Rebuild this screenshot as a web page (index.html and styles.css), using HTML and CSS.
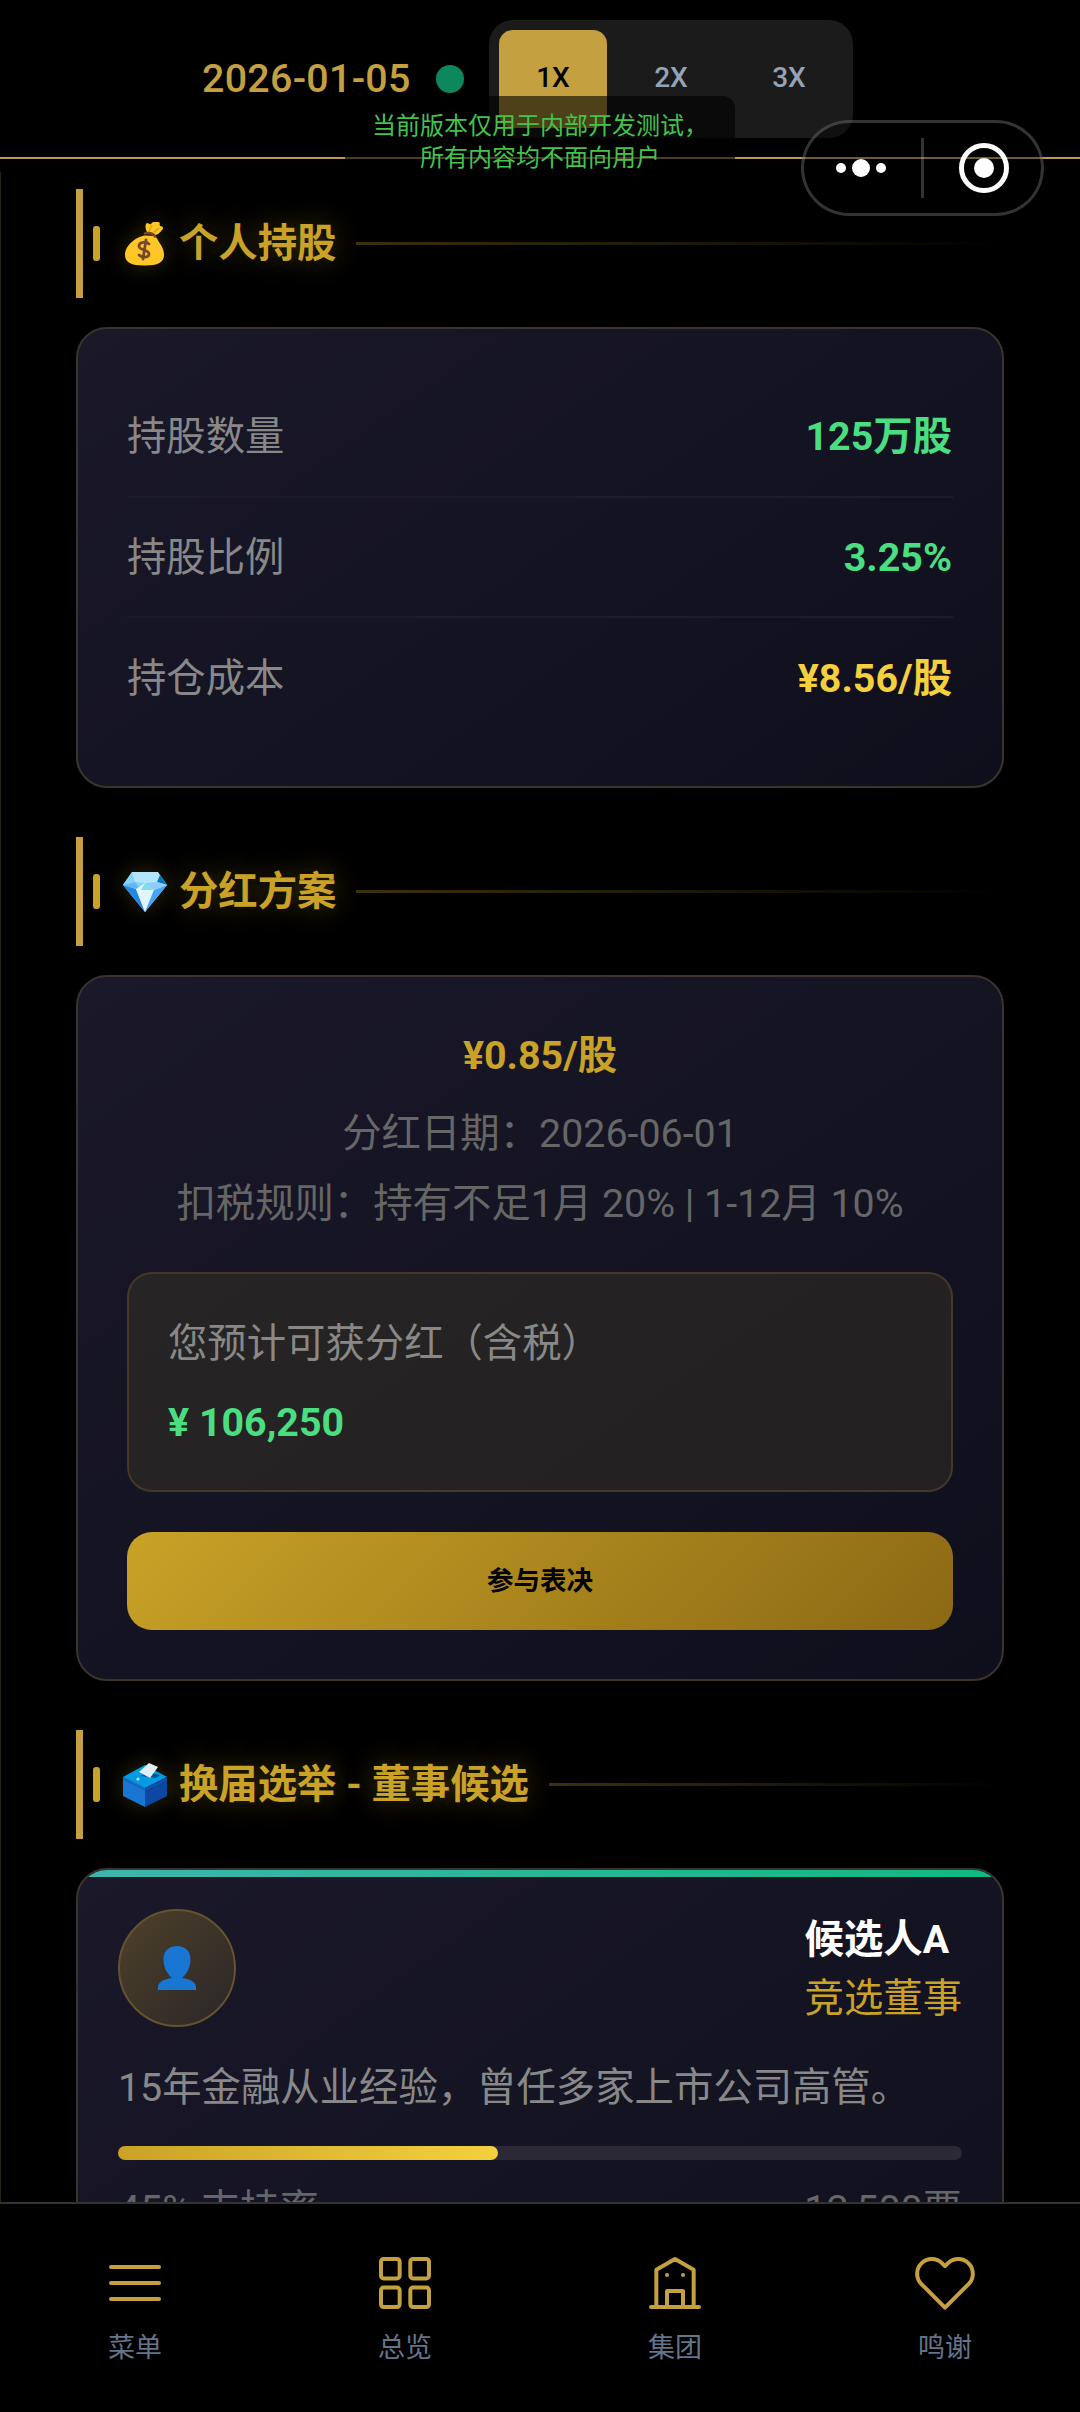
FILE: index.html
```html
<!DOCTYPE html>
<html lang="zh-CN">
<head>
<meta charset="utf-8">
<title>个人持股</title>
<link rel="stylesheet" href="styles.css">
</head>
<body>
<div class="app">
  <header class="topbar">
    <span class="date">2026-01-05</span>
    <span class="status"></span>
    <div class="speed">
      <button class="speed-btn active">1X</button>
      <button class="speed-btn">2X</button>
      <button class="speed-btn">3X</button>
    </div>
  </header>

  <main class="content">
    <h2 class="section-title">
      <svg class="emoji" viewBox="0 0 44 44">
        <path fill="#fdc727" d="M22 13.500C12 15 2 24 2 33c0 7.500 6 10.500 19.500 10.500S41 40.500 41 33c0-6-3-10-5-13-1.500-2.500-2-4-4-6z"/>
        <path fill="#fdc727" d="M24 10c-2-4-2-8 0-9 2 0 3 2 4 1 1-2 4-3 7-2 3 0 1 3 2 4 3 0 4 2 2 4-2 3-5 5-8 5z"/>
        <path d="M26 10l3-7M30 11l6-5" fill="none" stroke="#e9a613" stroke-width="1.8"/>
        <path d="M22 11.500c4-1 8 0 10 3" fill="none" stroke="#75482d" stroke-width="2.6" stroke-linecap="round"/>
        <path d="M26 22c-3-3-10-2-10 2 0 5 10 3 10 8 0 4-7 4-10 1M23 18l-3 19" fill="none" stroke="#75482d" stroke-width="2.8" stroke-linecap="round"/>
      </svg>
      <span class="title-text">个人持股</span>
    </h2>
    <section class="card holdings">
      <div class="row"><span class="label">持股数量</span><span class="value green">125万股</span></div>
      <div class="row"><span class="label">持股比例</span><span class="value green">3.25%</span></div>
      <div class="row"><span class="label">持仓成本</span><span class="value yellow">¥8.56/股</span></div>
    </section>

    <h2 class="section-title">
      <svg class="emoji" viewBox="0 0 44 44">
        <path fill="#b3e5fc" d="M9 2h26l9 13-22 27L0 15z"/>
        <path fill="#81d4fa" d="M9 2L0 15l12-3zM12 12l10 1-4 7z"/>
        <path fill="#1e88e5" d="M0 15l13 4 9 23z"/>
        <path fill="#64b5f6" d="M0 15l12-3 6 8-5-1z"/>
        <path fill="#0277bd" d="M37 5l7 10-10-3z"/>
        <path fill="#e1f5fe" d="M13 19l9-6 9 7-9 22z"/>
        <path fill="#42a5f5" d="M44 15l-13 5-9 22z"/>
        <path fill="#80deea" d="M22 13l9 7-13 0z"/>
        <path fill="#90caf9" d="M22 13l12-1 10 3-13 5z"/>
      </svg>
      <span class="title-text">分红方案</span>
    </h2>
    <section class="card dividend">
      <div class="price">¥0.85/股</div>
      <div class="note">分红日期：2026-06-01</div>
      <div class="note">扣税规则：持有不足1月 20% | 1-12月 10%</div>
      <div class="estimate">
        <div class="estimate-label">您预计可获分红（含税）</div>
        <div class="estimate-value">¥ 106,250</div>
      </div>
      <button class="vote">参与表决</button>
    </section>

    <h2 class="section-title">
      <svg class="emoji" viewBox="0 0 44 44">
        <path fill="#039be5" d="M0 14L22 2l22 12-22 11z"/>
        <path fill="#1976d2" d="M0 14l22 11v19L0 33z"/>
        <path fill="#0d47a1" d="M44 14L22 25v19l22-11z"/>
        <path d="M0 16l22 11 22-11" fill="none" stroke="#0d5cb5"/>
        <path fill="#01579b" d="M17 13l16 2 4-3-12-3z"/>
        <path fill="#e1eef5" d="M26 0l9 4-8 11-11-6z"/>
        <circle cx="15" cy="16" r="1.6" fill="#b3e5fc"/>
      </svg>
      <span class="title-text">换届选举 - 董事候选</span>
    </h2>
    <section class="card candidate">
      <div class="candidate-head">
        <div class="avatar">
          <svg viewBox="0 0 38 44"><path fill="#1976d2" d="M19 0c8 0 13.500 5 13.500 13 0 9-4 15-8.500 19 8 1 14 4 14 9v3H0v-3c0-5 6-8 14-9-4.500-4-8.500-10-8.500-19C5.500 5 11 0 19 0z"/></svg>
        </div>
        <div class="who">
          <div class="name">候选人A</div>
          <div class="role">竞选董事</div>
        </div>
      </div>
      <p class="bio">15年金融从业经验，曾任多家上市公司高管。</p>
      <div class="progress"><div class="progress-fill" style="width:45%"></div></div>
      <div class="stats"><span>45% 支持率</span><span>12,500票</span></div>
    </section>
  </main>

  <nav class="tabbar">
    <a class="tab"><svg class="tab-icon" viewBox="0 0 24 24"><path d="M3 6h18M3 12h18M3 18h18"/></svg><span>菜单</span></a>
    <a class="tab"><svg class="tab-icon" viewBox="0 0 24 24"><rect x="3" y="3" width="7" height="7.300" rx="1"/><rect x="14" y="3" width="7" height="7.300" rx="1"/><rect x="3" y="13.700" width="7" height="7.300" rx="1"/><rect x="14" y="13.700" width="7" height="7.300" rx="1"/></svg><span>总览</span></a>
    <a class="tab"><svg class="tab-icon" viewBox="0 0 24 24"><path d="M3 21h18M5 21V7l7-4 7 4v14M9 21v-6h6v6M9 9h.01M15 9h.01"/></svg><span>集团</span></a>
    <a class="tab"><svg class="tab-icon" viewBox="0 0 24 24"><path d="M20.840 4.610a5.500 5.500 0 0 0-7.780 0L12 5.670l-1.060-1.060a5.500 5.500 0 0 0-7.780 7.780l1.060 1.060L12 21.230l7.780-7.780 1.060-1.060a5.500 5.500 0 0 0 0-7.780z"/></svg><span>鸣谢</span></a>
  </nav>

  <div class="notice">当前版本仅用于内部开发测试，<br>所有内容均不面向用户</div>
  <div class="capsule">
    <svg viewBox="0 0 243 96">
      <g fill="#fff"><circle cx="40" cy="48" r="5"/><circle cx="60" cy="48" r="9"/><circle cx="80" cy="48" r="5"/><circle cx="183" cy="48" r="10"/></g>
      <path d="M121.500 18v60" stroke="#fff" stroke-opacity=".2" stroke-width="3"/>
      <circle cx="183" cy="48" r="22.500" fill="none" stroke="#fff" stroke-width="5"/>
    </svg>
  </div>
</div>
</body>
</html>
```
FILE: styles.css
```css
* { box-sizing: border-box; }

body {
  margin: 0;
  background: #000;
  color: #fff;
  font-family: Roboto, "Noto Sans CJK SC", sans-serif;
  font-size: 39.375px;
  line-height: 59px;
}

button {
  border: 0;
  padding: 0;
  font-family: inherit;
  line-height: 40px;
}

.app {
  position: relative;
  width: 1080px;
  height: 2412px;
  display: flex;
  flex-direction: column;
  overflow: hidden;
}

/* Top bar */
.topbar {
  flex: none;
  height: 159px;
  padding: 0 0 0 202px;
  display: flex;
  align-items: center;
  border-bottom: 2px solid #b8995a;
}

.date {
  width: 234px;
  color: #c4a040;
  font-weight: 500;
  letter-spacing: .3px;
}

.status {
  width: 28px;
  height: 28px;
  margin-right: 25px;
  border-radius: 50%;
  background: #0d875c;
}

.speed {
  display: flex;
  gap: 10px;
  height: 118px;
  padding: 10px;
  border-radius: 24px;
  background: #1b1b1b;
}

.speed-btn {
  width: 108px;
  padding-bottom: 2px;
  border-radius: 14px;
  background: none;
  color: #94a3b8;
  font-size: 28px;
  font-weight: 500;
}

.speed-btn.active {
  background: #c4a040;
  color: #000;
}

/* Scrolling content */
.content {
  flex: 1;
  min-height: 0;
  margin-top: 13px;
  padding: 17px 76px 0 75px;
  border-left: 1px solid #2a2418;
  overflow: hidden;
}

.section-title {
  display: flex;
  align-items: center;
  height: 109px;
  margin: 0 0 29px;
  padding-left: 10px;
  border-left: 7px solid #c4a040;
  color: #c9a227;
  font-size: 39.375px;
  font-weight: 700;
  white-space: nowrap;
}

.section-title::before {
  content: "";
  width: 7px;
  height: 35px;
  margin-right: 23px;
  border-radius: 3px;
  background: #c9a227;
}

.section-title::after {
  content: "";
  flex: 1;
  height: 3px;
  margin-left: 20px;
  background: linear-gradient(90deg, rgba(201, 162, 39, .3), transparent);
}

.emoji {
  width: 44px;
  height: 44px;
  margin-right: 12px;
  filter: drop-shadow(0 0 10px rgba(201, 162, 39, .25));
}

.title-text {
  text-shadow: 0 0 28px rgba(201, 162, 39, .35);
}

.card {
  margin-bottom: 49px;
  padding: 48px 49px;
  border: 2px solid #3a342c;
  border-radius: 31px;
  background: linear-gradient(145deg, #1a1829, #0f0f1c);
}

.row {
  display: flex;
  justify-content: space-between;
  align-items: center;
  height: 120px;
}

.row:first-child { height: 121px; }

.row:not(:last-child) { border-bottom: 2px solid #1d1c2a; }

.label,
.estimate-label,
.bio { color: #888; }

.value {
  padding-right: 1px;
  font-weight: 700;
}

.green { color: #4ade80; }
.yellow { color: #f4d03f; }

.price {
  height: 74px;
  line-height: 62px;
  color: #c9a227;
  font-weight: 700;
  text-align: center;
}

.note {
  height: 70px;
  line-height: 70px;
  color: #666;
  text-align: center;
  white-space: nowrap;
}

.dividend { padding-bottom: 49px; }

.estimate {
  height: 220px;
  margin: 33px 0 40px;
  padding: 30px 39px;
  border: 2px solid #443927;
  border-radius: 25px;
  background: linear-gradient(145deg, #262424, #222020);
}

.estimate-label,
.estimate-value { line-height: 79px; }

.estimate-value {
  color: #4ade80;
  font-weight: 700;
}

.vote {
  display: block;
  width: 100%;
  height: 98px;
  border-radius: 25px;
  background: linear-gradient(135deg, #c9a227, #8b6914);
  color: #000;
  font-size: 26.500px;
  font-weight: 700;
}

.candidate {
  height: 560px;
  padding: 0 40px;
  overflow: hidden;
}

.candidate::before {
  content: "";
  display: block;
  height: 7px;
  margin: 0 -40px 32px;
  background: linear-gradient(90deg, #3eb5ad, #10b981);
}

.candidate-head {
  display: flex;
  justify-content: space-between;
  align-items: center;
  height: 118px;
}

.avatar {
  display: flex;
  align-items: center;
  justify-content: center;
  width: 118px;
  height: 118px;
  border: 2px solid #65522f;
  border-radius: 50%;
  background: linear-gradient(135deg, #4d4129, #2b2628);
}

.avatar svg {
  width: 38px;
  height: 44px;
}

.who { padding-top: 2px; }
.name { font-weight: 700; }
.role { color: #c9a227; }

.bio {
  margin: 31px 0 29px;
  white-space: nowrap;
}

.progress {
  height: 14px;
  border-radius: 7px;
  background: #2b2936;
}

.progress-fill {
  height: 100%;
  border-radius: 7px;
  background: linear-gradient(90deg, #c9a227, #f4d03f);
}

.stats {
  display: flex;
  justify-content: space-between;
  margin-top: 20px;
  color: #666;
}

/* Bottom navigation */
.tabbar {
  flex: none;
  display: grid;
  grid-template-columns: repeat(4, 1fr);
  height: 210px;
  border-top: 2px solid #333;
  background: #000;
}

.tab {
  display: flex;
  flex-direction: column;
  align-items: center;
  padding-top: 47px;
  color: #64748b;
  font-size: 27px;
  line-height: 40px;
}

.tab-icon {
  width: 64px;
  height: 64px;
  margin-bottom: 13px;
  fill: none;
  stroke: #c4a040;
  stroke-width: 1.500;
  stroke-linecap: round;
  stroke-linejoin: round;
}

/* Floating overlays */
.notice {
  position: absolute;
  left: 345px;
  top: 96px;
  width: 390px;
  padding: 14px 0;
  border-radius: 12px;
  background: rgba(0, 0, 0, .6);
  color: #44c34c;
  font-size: 24px;
  line-height: 32px;
  text-align: center;
}

.capsule {
  position: absolute;
  left: 801px;
  top: 120px;
  width: 243px;
  height: 96px;
  border-radius: 48px;
  background: rgba(0, 0, 0, .4);
  box-shadow: inset 0 0 0 3px rgba(255, 255, 255, .2);
}

.capsule svg { display: block; }
```
